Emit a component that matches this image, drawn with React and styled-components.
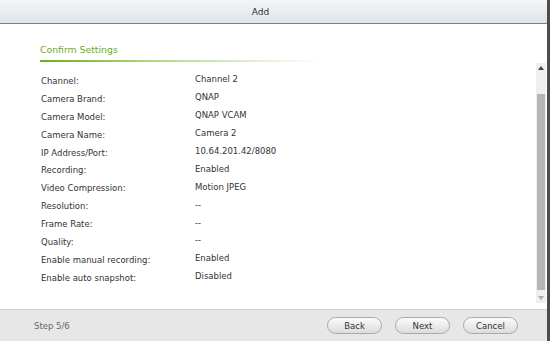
import React from "react";
import styled, { createGlobalStyle } from "styled-components";

const Global = createGlobalStyle`
  html, body { margin: 0; padding: 0; background: #4d4d4d; }
  body { width: 550px; height: 341px; overflow: hidden; }
`;

const Frame = styled.div`
  display: flex;
  width: 550px;
  height: 341px;
`;

const Dialog = styled.div`
  width: 547px;
  height: 341px;
  display: flex;
  flex-direction: column;
  background: #fff;
  font-family: "DejaVu Sans", Verdana, sans-serif;
`;

const TitleBar = styled.div`
  height: 23px;
  flex: none;
  display: flex;
  align-items: center;
  justify-content: center;
  padding-right: 26px;
  background: linear-gradient(#f3f5f7, #dfe4ea);
  border-bottom: 1px solid #7d8084;
  font-size: 9px;
  color: #333;
`;

const Body = styled.div`
  flex: 1;
  display: flex;
  min-height: 0;
`;

const Main = styled.div`
  flex: 1;
  padding: 20px 0 0 40px;
`;

const Heading = styled.div`
  width: 282px;
  padding-bottom: 5px;
  font-size: 9.3px;
  font-weight: 500;
  color: #68b01a;
  border-bottom: 2px solid transparent;
  border-image: linear-gradient(90deg, #6aae1e 0%, #b9dc8f 45%, #ffffff 100%) 1;
`;

const Rows = styled.div`
  display: grid;
  grid-template-columns: 154px 1fr;
  grid-auto-rows: 17.9px;
  margin-top: 10px;
  padding-left: 1px;
  font-size: 8.5px;
  color: #333;
`;

const Label = styled.div`
  display: flex;
  align-items: center;
`;

const Value = styled.div`
  display: flex;
  align-items: center;
  margin-top: -3px;
`;

const ScrollCol = styled.div`
  width: 10px;
  margin: 39px 1px 6px 0;
  display: flex;
  flex-direction: column;
  background: #efefef;
`;

const Arrow = styled.div`
  height: 10px;
  display: flex;
  align-items: center;
  justify-content: center;
`;

const Thumb = styled.div`
  flex: 1;
  margin: 21px 1px 3px;
  background: #b6b6b6;
`;

const Footer = styled.div`
  height: 31px;
  flex: none;
  display: flex;
  align-items: center;
  padding: 0 29px 0 34px;
  background: #e7e7e7;
  border-top: 1px solid #cfcfcf;
`;

const Step = styled.div`
  flex: 1;
  font-size: 8.5px;
  color: #666;
`;

const Buttons = styled.div`
  display: flex;
  gap: 13px;
`;

const Button = styled.button`
  width: 55px;
  height: 17px;
  padding: 0;
  border: 1px solid #a9a9a9;
  border-radius: 9px;
  background: linear-gradient(#fbfbfb, #dcdcdc);
  font-family: "DejaVu Sans", Verdana, sans-serif;
  font-size: 8.5px;
  color: #333;
`;

const rows = [
  ["Channel:", "Channel 2"],
  ["Camera Brand:", "QNAP"],
  ["Camera Model:", "QNAP VCAM"],
  ["Camera Name:", "Camera 2"],
  ["IP Address/Port:", "10.64.201.42/8080"],
  ["Recording:", "Enabled"],
  ["Video Compression:", "Motion JPEG"],
  ["Resolution:", "--"],
  ["Frame Rate:", "--"],
  ["Quality:", "--"],
  ["Enable manual recording:", "Enabled"],
  ["Enable auto snapshot:", "Disabled"],
];

export default function App() {
  return (
    <Frame>
      <Global />
      <Dialog>
        <TitleBar>Add</TitleBar>
        <Body>
          <Main>
            <Heading>Confirm Settings</Heading>
            <Rows>
              {rows.map(([l, v]) => (
                <React.Fragment key={l}>
                  <Label>{l}</Label>
                  <Value>{v}</Value>
                </React.Fragment>
              ))}
            </Rows>
          </Main>
          <ScrollCol>
            <Arrow>
              <svg width="6" height="4" viewBox="0 0 6 4"><path d="M0 4 L3 0 L6 4 Z" fill="#444" /></svg>
            </Arrow>
            <Thumb />
            <Arrow>
              <svg width="6" height="4" viewBox="0 0 6 4"><path d="M0 0 L3 4 L6 0 Z" fill="#aaa" /></svg>
            </Arrow>
          </ScrollCol>
        </Body>
        <Footer>
          <Step>Step 5/6</Step>
          <Buttons>
            <Button>Back</Button>
            <Button>Next</Button>
            <Button>Cancel</Button>
          </Buttons>
        </Footer>
      </Dialog>
    </Frame>
  );
}
